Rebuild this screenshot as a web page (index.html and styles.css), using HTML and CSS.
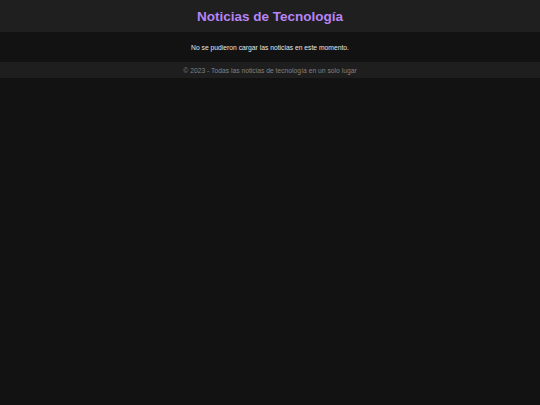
FILE: index.html
```html
<!DOCTYPE html>
<html lang="es">
<head>
<meta charset="utf-8">
<title>Noticias de Tecnología</title>
<link rel="stylesheet" href="styles.css">
</head>
<body>
<header class="site-header">
  <h1 class="site-title">Noticias de Tecnología</h1>
</header>
<main class="content">
  <p class="message">No se pudieron cargar las noticias en este momento.</p>
</main>
<footer class="site-footer">
  <p class="footer-text">© 2023 - Todas las noticias de tecnología en un solo lugar</p>
</footer>
</body>
</html>
```
FILE: styles.css
```css
html, body {
  margin: 0;
  padding: 0;
  background: #121212;
  font-family: "Liberation Sans", Arial, sans-serif;
}
.site-header {
  background: #1f1f1f;
  height: 32px;
  display: flex;
  align-items: center;
  justify-content: center;
}
.site-title {
  margin: 0;
  font-size: 13.5px;
  font-weight: bold;
  color: #b884f5;
}
.content {
  height: 30px;
  display: flex;
  align-items: center;
  justify-content: center;
}
.message {
  margin: 0;
  font-size: 6.75px;
  color: #e6e6e6;
}
.site-footer {
  background: #1e1e1e;
  height: 16px;
  display: flex;
  align-items: center;
  justify-content: center;
}
.footer-text {
  margin: 0;
  font-size: 6.75px;
  color: #808080;
}
```
